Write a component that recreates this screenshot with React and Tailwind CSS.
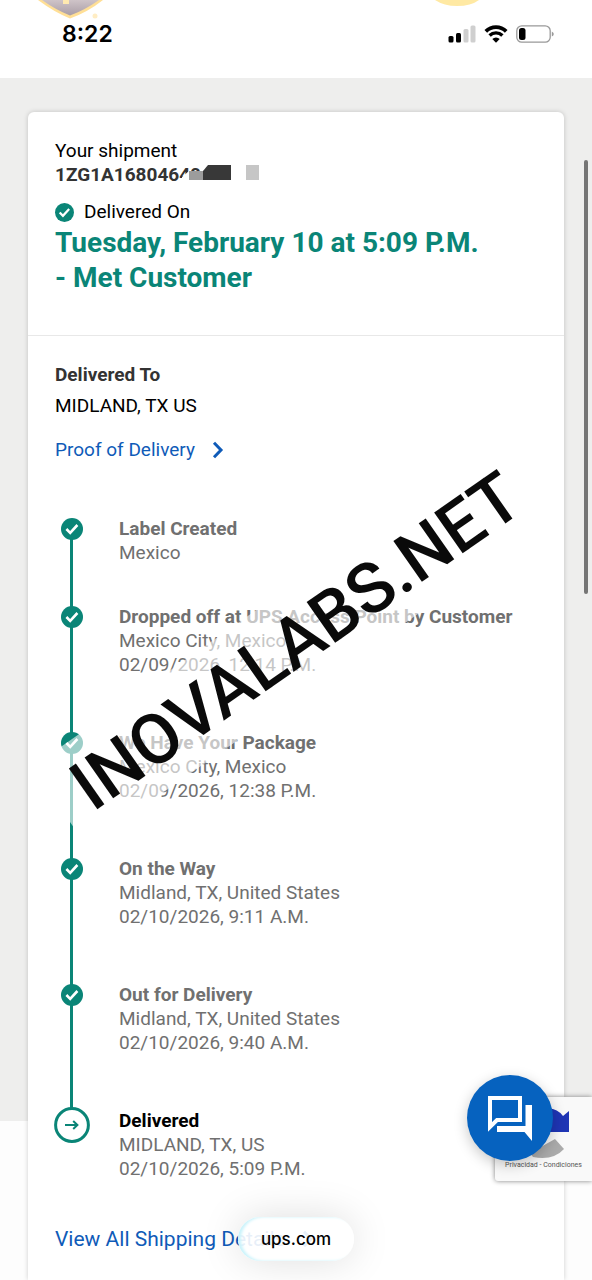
import React from 'react';

const steps = [
  { title: 'Label Created', lines: ['Mexico'], gap: 'pb-[40px]' },
  { title: 'Dropped off at UPS Access Point by Customer', lines: ['Mexico City, Mexico', '02/09/2026, 12:14 P.M.'], gap: 'pb-[54px]' },
  { title: 'We Have Your Package', lines: ['Mexico City, Mexico', '02/09/2026, 12:38 P.M.'], gap: 'pb-[54px]' },
  { title: 'On the Way', lines: ['Midland, TX, United States', '02/10/2026, 9:11 A.M.'], gap: 'pb-[54px]' },
  { title: 'Out for Delivery', lines: ['Midland, TX, United States', '02/10/2026, 9:40 A.M.'], gap: 'pb-[54px]' },
  { title: 'Delivered', lines: ['MIDLAND, TX, US', '02/10/2026, 5:09 P.M.'], gap: 'pb-[46px]', current: true },
];

const CheckCircle = ({ className }) => (
  <svg viewBox="0 0 22 22" className={className} aria-hidden="true">
    <circle cx="11" cy="11" r="11" fill="#0a8577" />
    <path d="M5.4 11 9.2 14.8 16.4 7" fill="none" stroke="#fff" strokeWidth="2.6" />
  </svg>
);

const ArrowCircle = () => (
  <svg viewBox="0 0 36 36" className="w-9 h-9" aria-hidden="true">
    <circle cx="18" cy="18" r="16.4" fill="#fff" stroke="#0a8577" strokeWidth="3" />
    <path d="M11 18h12M19.2 14l4.2 4-4.2 4" fill="none" stroke="#0a8577" strokeWidth="2" />
  </svg>
);

const Chevron = () => (
  <svg viewBox="0 0 12 18" className="w-3 h-[18px]" aria-hidden="true">
    <path d="M2 1.8 9 9l-7 7.2" fill="none" stroke="#0f5bb8" strokeWidth="3" />
  </svg>
);

const StatusBar = () => (
  <header className="relative h-[78px] bg-white flex items-start justify-between pl-[62px] pr-[38px] pt-[20px]">
    <svg viewBox="0 0 110 22" className="absolute left-0 top-0 w-[110px] h-[22px]" aria-hidden="true">
      <defs>
        <linearGradient id="shield" x1="0" y1="0" x2="0" y2="1">
          <stop offset="0" stopColor="#cfc4c8" />
          <stop offset="1" stopColor="#a99da6" />
        </linearGradient>
      </defs>
      <path d="M38 0 Q54 12 70 18.500 Q88 12 103 0Z" fill="#ffdf96" />
      <path d="M42 0 Q56 10 70 15.500 Q85 10 99 0Z" fill="url(#shield)" />
      <path d="M63 0h6v4h-6Z" fill="#ffe9b0" />
      <circle cx="95" cy="16" r="2.500" fill="#ffedc4" />
    </svg>
    <svg viewBox="0 0 50 8" className="absolute right-[110px] top-0 w-[50px] h-2" aria-hidden="true">
      <path d="M3 0 Q12 6 25 6 Q39 6 47 0Z" fill="#ffe9a3" />
    </svg>
    <span className="font-['Inter'] font-semibold text-[23px] leading-7 text-black">8:22</span>
    <div className="flex items-center gap-2 h-7">
      <svg viewBox="0 0 28 18" className="w-7 h-[18px]" aria-hidden="true">
        <rect x="0.500" y="11" width="5" height="6.500" rx="1.500" fill="#000" />
        <rect x="8" y="8" width="5" height="9.500" rx="1.500" fill="#000" />
        <rect x="15.500" y="4" width="5" height="13.500" rx="1.500" fill="#cfcfcf" />
        <rect x="22.500" y="0.500" width="5" height="17" rx="1.500" fill="#cfcfcf" />
      </svg>
      <svg viewBox="0 0 24 18" className="w-6 h-[18px]" aria-hidden="true">
        <path d="M1.800 6.300a14.500 14.500 0 0 1 20.400 0" fill="none" stroke="#000" strokeWidth="3.800" />
        <path d="M5.600 10.500a9.200 9.200 0 0 1 12.800 0" fill="none" stroke="#000" strokeWidth="3.400" />
        <path d="M12 17.800 8.300 14a5.200 5.200 0 0 1 7.400 0Z" fill="#000" />
      </svg>
      <svg viewBox="0 0 38 18" className="w-[38px] h-[18px]" aria-hidden="true">
        <rect x="0.800" y="0.800" width="33.400" height="16.400" rx="5" fill="#fff" stroke="#999" strokeWidth="1.300" />
        <rect x="3" y="3" width="6.500" height="12" rx="2.500" fill="#000" />
        <path d="M35.800 6.500q2 1 2 2.500t-2 2.500Z" fill="#999" />
      </svg>
    </div>
  </header>
);

const Step = ({ step, last }) => (
  <li className={`relative flex ${step.gap}`}>
    {!last && <span className="absolute left-[15px] top-3 -bottom-3 w-[3px] bg-[#0a8577]" />}
    <div className="relative w-[33px] h-6 mr-[31px] flex items-center justify-center shrink-0">
      {step.current ? <div className="shrink-0 mt-2"><ArrowCircle /></div> : <CheckCircle className="w-[22px] h-[22px]" />}
    </div>
    <div className="text-[#707070]">
      <h3 className={step.current ? 'font-bold text-black' : 'font-bold'}>{step.title}</h3>
      {step.lines.map((line) => (
        <p key={line}>{line}</p>
      ))}
    </div>
  </li>
);

const Watermark = () => (
  <div className="absolute inset-x-0 top-[593px] flex justify-center pointer-events-none">
    <div className="-rotate-35 h-24 px-6 flex items-center bg-white/60 font-medium text-[70px] leading-none text-[#0a0a0a] whitespace-nowrap">
      INOVALABS.NET
    </div>
  </div>
);

const PrivacyBadge = () => (
  <div className="absolute right-0 bottom-[99px] w-[97px] h-[84px] bg-[#f9f9f9] rounded-l-[3px] shadow-[0_0_5px_#808080]">
    <svg viewBox="0 0 97 84" className="w-full h-full" aria-hidden="true">
      <path d="M45 13Q60 8 68 19L74 14V35H50Z" fill="#1f35b5" />
      <path d="M35 56 60 42 69 52Q58 64 38 60Z" fill="#ababab" />
    </svg>
    <p className="absolute inset-x-0 bottom-[11px] text-center text-[7px] leading-[9px] text-[#555] whitespace-nowrap">
      <a href="#privacy">Privacidad</a> - <a href="#terms">Condiciones</a>
    </p>
  </div>
);

const App = () => (
  <div className="relative min-h-screen flex flex-col overflow-hidden bg-white font-['Roboto',sans-serif] text-[19px] leading-6 text-black">
    <StatusBar />

    <main className="flex-1 flex px-7 pt-[34px] bg-[linear-gradient(#eeeeed_1043px,#fdfdfd_1043px)]">
      <article className="flex-1 bg-white rounded-t-md shadow-[0_0_5px_#00000030]">
        <section className="h-[224px] px-[27px] pt-[27px] border-b border-[#e8e8e8]">
          <p>Your shipment</p>
          <div className="relative">
            <p className="font-bold text-[#333]">1ZG1A16804640</p>
            <svg viewBox="0 0 90 20" className="absolute left-[120px] top-0 w-[90px] h-5" aria-hidden="true">
              <path d="M7 14 14 8H90V20H7Z" fill="#fff" />
              <path d="M14 8h14v9H14Z" fill="#9c9c9c" />
              <path d="M28 8 33 2H56V17H28Z" fill="#383838" />
              <path d="M71 2h13v15H71Z" fill="#c6c6c6" />
            </svg>
          </div>
          <div className="flex items-center gap-[10px] mt-[13px]">
            <CheckCircle className="w-[19px] h-[19px]" />
            <span>Delivered On</span>
          </div>
          <h1 className="mt-[1px] text-[28px] leading-[35px] font-bold text-[#0a8577]">
            Tuesday, February 10 at 5:09 P.M.
            <br />- Met Customer
          </h1>
        </section>

        <section className="px-[27px] pt-[27px]">
          <h2 className="font-bold text-[#333]">Delivered To</h2>
          <p className="mt-[7px]">MIDLAND, TX US</p>
          <a href="#proof" className="mt-5 inline-flex items-center gap-[17px] text-[#0f5bb8]">
            Proof of Delivery
            <Chevron />
          </a>

          <ol className="mt-[55px]">
            {steps.map((step, i) => (
              <Step key={step.title} step={step} last={i === steps.length - 1} />
            ))}
          </ol>

          <a href="#details" className="mb-7 inline-flex items-center gap-[17px] text-[21px] text-[#0f5bb8]">
            View All Shipping Details
            <Chevron />
          </a>
        </section>
      </article>
    </main>

    <div className="absolute right-1 top-[160px] w-1 h-[434px] rounded-full bg-[#757575]" />
    <Watermark />
    <PrivacyBadge />

    <button
      aria-label="Chat"
      className="absolute right-[39px] bottom-[119px] w-[86px] h-[86px] rounded-full bg-[#0662bf] flex items-center justify-center shadow-[0_4px_14px_#00000038]"
    >
      <svg viewBox="0 0 46 46" className="w-[46px] h-[46px]" aria-hidden="true">
        <path d="M3 3H33V25H10L3 32Z" fill="none" stroke="#fff" strokeWidth="4" />
        <path d="M38.500 10H45V46L37.500 37H10V31H38.500Z" fill="#fff" />
      </svg>
    </button>

    <div className="absolute inset-x-0 bottom-[19px] flex justify-center">
      <button className="w-[116px] h-11 rounded-full bg-white/90 text-center font-['Inter'] font-medium text-[17px] text-black shadow-[0_0_40px_#00000022,inset_3px_0_3px_#c9f3fb]">
        ups.com
      </button>
    </div>
  </div>
);

export default App;
